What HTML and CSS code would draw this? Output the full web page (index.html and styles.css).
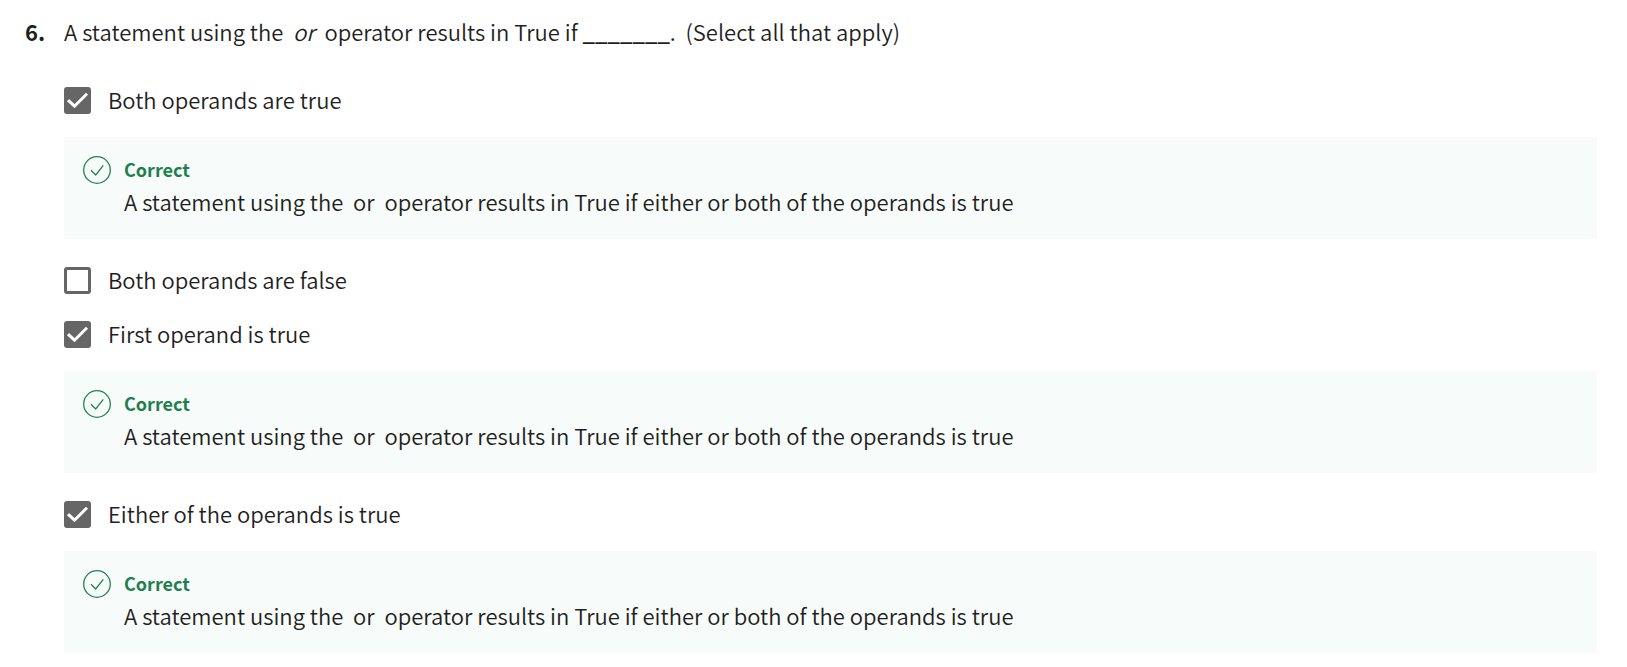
FILE: index.html
```html
<!DOCTYPE html>
<html lang="en">
<head>
<meta charset="utf-8">
<title>Question 6</title>
<link rel="stylesheet" href="styles.css">
</head>
<body>
<svg class="sprite" aria-hidden="true">
  <symbol id="tick" viewBox="0 0 27 27"><path d="M4 13.200L10.500 19.200L23 6.800" fill="none" stroke="currentColor" stroke-width="3"/></symbol>
  <symbol id="correct" viewBox="0 0 28 28"><g fill="none" stroke="currentColor" stroke-width="1.300"><circle cx="14" cy="14" r="13.300"/><path d="M8 14.300L12.700 19L20.300 9.300"/></g></symbol>
</svg>
<main class="question">
  <span class="number">6.</span>
  <fieldset class="body">
    <legend class="prompt">A statement using the&nbsp; <em>or</em>&nbsp; operator results in True if <span class="blank">_______</span>.&nbsp; (Select all that apply)</legend>
    <label class="option"><span class="box"><input type="checkbox" checked><svg class="tick"><use href="#tick"/></svg></span>Both operands are true</label>
    <section class="feedback">
      <svg class="status"><use href="#correct"/></svg>
      <div><h2 class="verdict">Correct</h2><p class="reason">A statement using the&nbsp; or&nbsp; operator results in True if either or both of the operands is true</p></div>
    </section>
    <label class="option"><span class="box"><input type="checkbox"><svg class="tick"><use href="#tick"/></svg></span>Both operands are false</label>
    <label class="option"><span class="box"><input type="checkbox" checked><svg class="tick"><use href="#tick"/></svg></span>First operand is true</label>
    <section class="feedback">
      <svg class="status"><use href="#correct"/></svg>
      <div><h2 class="verdict">Correct</h2><p class="reason">A statement using the&nbsp; or&nbsp; operator results in True if either or both of the operands is true</p></div>
    </section>
    <label class="option"><span class="box"><input type="checkbox" checked><svg class="tick"><use href="#tick"/></svg></span>Either of the operands is true</label>
    <section class="feedback">
      <svg class="status"><use href="#correct"/></svg>
      <div><h2 class="verdict">Correct</h2><p class="reason">A statement using the&nbsp; or&nbsp; operator results in True if either or both of the operands is true</p></div>
    </section>
  </fieldset>
</main>
</body>
</html>
```
FILE: styles.css
```css
* { box-sizing: border-box; }
body {
  margin: 0;
  background: #fff;
  color: #1f1f1f;
  font: 350 22px/36px "Noto Sans CJK JP", "Noto Sans", sans-serif;
}
.sprite { display: none; }
.question {
  display: grid;
  grid-template-columns: 39px minmax(0, 1fr);
  padding: 13px 30px 0 25px;
}
.number { font-weight: 700; }
.body { min-width: 0; margin: 0; padding: 0; border: 0; }
.prompt { padding: 0; margin-bottom: 25px; }
.blank { font-weight: 700; }
.option {
  display: flex;
  align-items: flex-start;
  gap: 17px;
  padding: 7px 0 11px;
}
.box { display: grid; width: 27px; height: 27px; margin-top: 6px; }
.box > * { grid-area: 1 / 1; }
.box input {
  appearance: none;
  width: 27px;
  height: 27px;
  margin: 0;
  border: 3px solid #666;
  border-radius: 3px;
}
.box input:checked { background: #666; }
.tick { width: 27px; height: 27px; color: #fff; pointer-events: none; visibility: hidden; }
.box input:checked + .tick { visibility: visible; }
.feedback {
  display: flex;
  align-items: flex-start;
  gap: 13px;
  margin: 9px 0 15px;
  padding: 16px 19px 22px;
  background: #f7fbf9;
}
.status { flex: none; width: 28px; height: 28px; margin-top: 3px; color: #1f8354; }
.verdict, .reason { margin: 0; line-height: 32px; }
.verdict { color: #1f7f50; font-size: 18px; }
```
